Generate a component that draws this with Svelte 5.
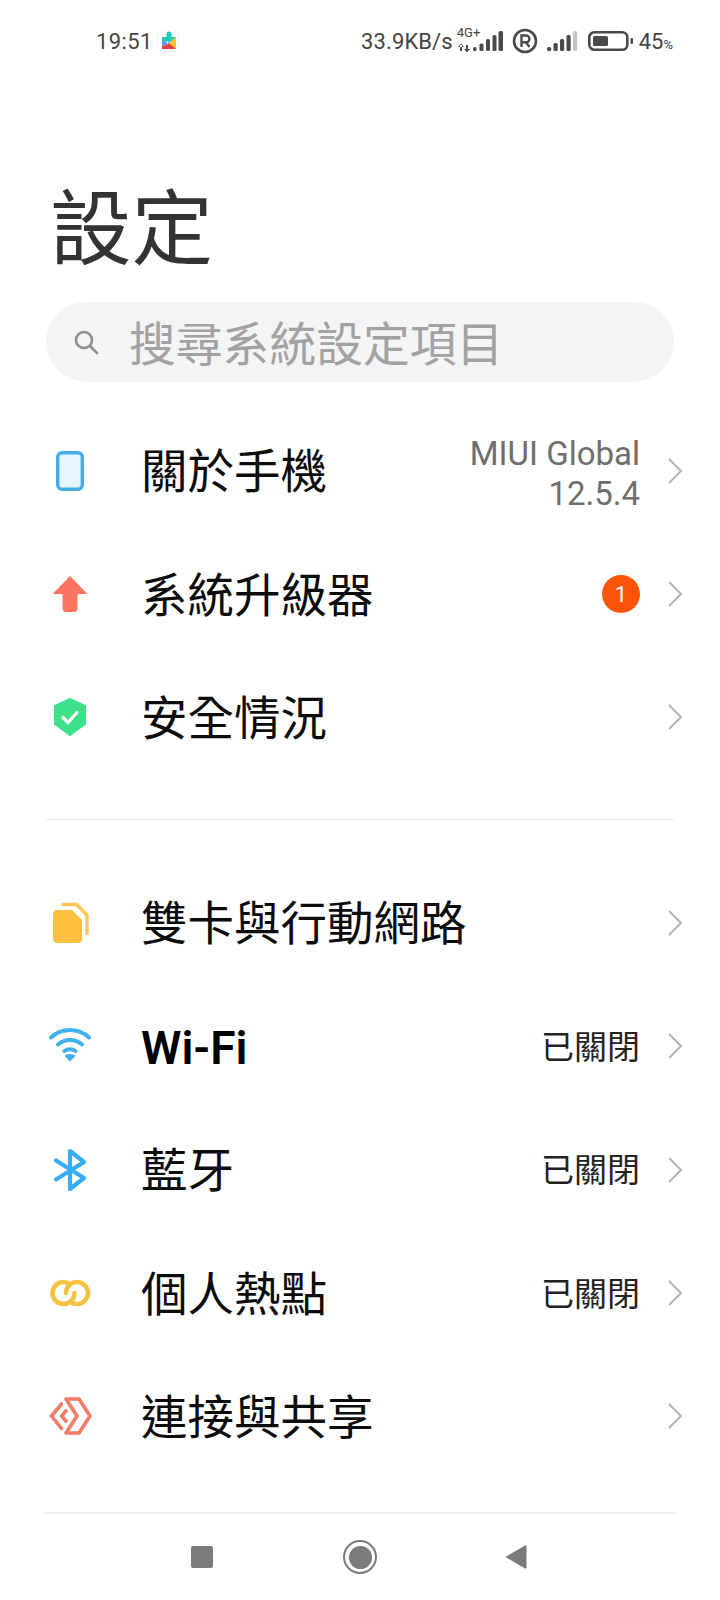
<script>
	const topRows = [
		{ icon: 'phone', label: '關於手機', value: ['MIUI Global', '12.5.4'] },
		{ icon: 'arrow', label: '系統升級器', badge: '1' },
		{ icon: 'shield', label: '安全情況' }
	];
	const netRows = [
		{ icon: 'sim', label: '雙卡與行動網路' },
		{ icon: 'wifi', label: 'Wi-Fi', value: ['已關閉'], strong: true },
		{ icon: 'bt', label: '藍牙', value: ['已關閉'] },
		{ icon: 'hotspot', label: '個人熱點', value: ['已關閉'] },
		{ icon: 'share', label: '連接與共享' }
	];
</script>

{#snippet rowIcon(name)}
	<svg class="row-icon" viewBox="0 0 48 48" width="48" height="48" fill="none">
		{#if name === 'phone'}
			<rect x="11.700" y="5.700" width="24.600" height="36.600" rx="4.500" fill="#e6f4fe" stroke="#44ade8" stroke-width="3.400" />
		{:else if name === 'arrow'}
			<path d="M24 6.500 40.500 23.500H31V39a2.500 2.500 0 0 1-2.500 2.500H19.500A2.500 2.500 0 0 1 17 39V23.500H7.500Z" fill="#fd7560" stroke="#fd7560" stroke-width="1" stroke-linejoin="round" />
		{:else if name === 'shield'}
			<path d="M24 6 39 13V31L24 42 9 31V13Z" fill="#3ee08a" stroke="#3ee08a" stroke-width="2" stroke-linejoin="round" />
			<path d="M17 24.500 22 29.500 31 19.500" stroke="#fff" stroke-width="3.200" stroke-linecap="round" stroke-linejoin="round" />
		{:else if name === 'sim'}
			<path d="M7 15a4 4 0 0 1 4-4H26L36 21V40a4 4 0 0 1-4 4H11a4 4 0 0 1-4-4Z" fill="#ffc040" />
			<path d="M17 5.500H30.500L41 16V34.500" stroke="#ffc752" stroke-width="3.400" stroke-linecap="round" stroke-linejoin="round" />
		{:else if name === 'wifi'}
			<path d="M5 15.500C15.500 5.500 32.500 5.500 43 15.500" stroke="#3fb0f2" stroke-width="4" stroke-linecap="round" />
			<path d="M12 22.500C19 16.500 29 16.500 36 22.500" stroke="#3fb0f2" stroke-width="4" stroke-linecap="round" />
			<path d="M18.500 29C21.500 26.800 26.500 26.800 29.500 29" stroke="#3fb0f2" stroke-width="4" stroke-linecap="round" />
			<path d="M24 38.500 19.500 34C22 32.500 26 32.500 28.500 34Z" fill="#3fb0f2" stroke="#3fb0f2" stroke-width="1.500" stroke-linejoin="round" />
		{:else if name === 'bt'}
			<path d="M10 14.500 38 32 24 43V5L38 16 10 33.500" stroke="#36adf5" stroke-width="4.200" stroke-linecap="round" stroke-linejoin="round" />
		{:else if name === 'hotspot'}
			<path d="M23 14.470A11 11 0 1 0 28.500 24" stroke="#f6c244" stroke-width="4.600" stroke-linecap="round" />
			<path d="M25.500 33.530A11 11 0 1 0 20 24" stroke="#f6c244" stroke-width="4.600" stroke-linecap="round" />
		{:else if name === 'share'}
			<path d="M20 7H33L44 24 33 41H20L31 24Z" stroke="#f27b66" stroke-width="3.600" stroke-linejoin="round" />
			<path d="M15.500 12 5.500 24 15.500 36.500" stroke="#f27b66" stroke-width="3.600" stroke-linecap="round" stroke-linejoin="round" />
			<path d="M20 19 15.500 24 20 29" stroke="#f27b66" stroke-width="3.600" stroke-linecap="round" stroke-linejoin="round" />
		{/if}
	</svg>
{/snippet}

{#snippet row(item)}
	<div class="row">
		<span class="icon-cell">{@render rowIcon(item.icon)}</span>
		<span class="label" class:strong={item.strong}>{item.label}</span>
		{#if item.value}
			<span class="value" class:dark={item.value[0] === '已關閉'}>
				{#each item.value as line}
					<span>{line}</span>
				{/each}
			</span>
		{/if}
		{#if item.badge}
			<span class="badge">{item.badge}</span>
		{/if}
		<svg class="chevron" viewBox="0 0 16 28" width="16" height="28" fill="none">
			<path d="M2 2 14 14 2 26" stroke="#b5b5b5" stroke-width="2" />
		</svg>
	</div>
{/snippet}

<div class="page">
	<header class="status">
		<div class="status-left">
			<span class="time">19:51</span>
			<svg viewBox="0 0 22 22" width="22" height="22" class="play">
				<rect x="0.500" y="0.500" width="21" height="21" rx="5" fill="#fff" stroke="#f4f4f4" />
				<path d="M5 7H9.500V4a2.500 2.500 0 0 1 5 0V7H19L12 13 10 11H5Z" fill="#1fc8b4" />
				<path d="M19 7V19L12 13Z" fill="#fbc02d" />
				<path d="M5 11H8a2.200 2.200 0 0 1 0 4.400H5Z" fill="#4d9cf5" />
				<path d="M5 19V15.400H8L12 13 19 19Z" fill="#e53e3e" />
			</svg>
		</div>
		<div class="status-right">
			<span class="speed">33.9KB/s</span>
			<span class="net">
				<span class="net-type">4G+</span>
				<svg viewBox="0 0 48 24" width="48" height="24" fill="#4a4a4a">
					<path d="M5 17V23H7V17ZM3 19 6 15.500 9 19ZM11 17V23H13V17ZM9 21 12 24.500 15 21Z" />
					<rect x="18" y="19" width="3.500" height="4" rx="1.500" />
					<rect x="24.500" y="15.500" width="4" height="7.500" rx="1.500" />
					<rect x="31" y="11" width="4" height="12" rx="1.500" />
					<rect x="37.500" y="7" width="4" height="16" rx="1.500" />
					<rect x="43.500" y="3" width="4.500" height="20" rx="1.500" />
				</svg>
			</span>
			<svg class="roam" viewBox="0 0 26 26" width="26" height="26" fill="none">
				<circle cx="13" cy="13" r="11" stroke="#4a4a4a" stroke-width="2.600" />
				<path d="M9.500 19V7.500H14a3.400 3.400 0 0 1 0 6.800H9.500M14 14.300 17.500 19" stroke="#4a4a4a" stroke-width="2.400" />
			</svg>
			<svg class="sig2" viewBox="0 0 34 24" width="34" height="24" fill="#4a4a4a">
				<rect x="1" y="18" width="4.200" height="4" rx="1.500" />
				<rect x="7.500" y="14" width="4.200" height="8" rx="1.500" />
				<rect x="14" y="10" width="4.200" height="12" rx="1.500" />
				<rect x="20.500" y="6" width="4.200" height="16" rx="1.500" />
				<rect x="27" y="2" width="4.200" height="20" rx="1.500" fill="#c4c4c4" />
			</svg>
			<svg class="battery" viewBox="0 0 46 20" width="46" height="20" fill="none">
				<rect x="1.300" y="1.300" width="38" height="17.400" rx="5" stroke="#4a4a4a" stroke-width="2.600" />
				<rect x="5" y="5" width="15" height="10" rx="1.500" fill="#4a4a4a" />
				<rect x="42.500" y="7" width="2.500" height="6" rx="1" fill="#4a4a4a" />
			</svg>
			<span class="pct">45<small>%</small></span>
		</div>
	</header>

	<h1 class="title">設定</h1>

	<div class="search">
		<svg viewBox="0 0 28 28" width="28" height="28" fill="none">
			<circle cx="12" cy="12" r="8" stroke="#8f8f8f" stroke-width="2.600" />
			<path d="M18 18 25 25" stroke="#8f8f8f" stroke-width="2.600" stroke-linecap="round" />
		</svg>
		<span>搜尋系統設定項目</span>
	</div>

	<section class="group first">
		{#each topRows as item}
			{@render row(item)}
		{/each}
	</section>

	<div class="divider"></div>

	<section class="group">
		{#each netRows as item}
			{@render row(item)}
		{/each}
	</section>

	<nav class="navbar">
		<span class="nav-square"></span>
		<span class="nav-home"><span></span></span>
		<svg viewBox="0 0 24 26" width="24" height="26"><path d="M1.500 13 21 1.500a1 1 0 0 1 1.500 1V23.500a1 1 0 0 1-1.500 1Z" fill="#7b7b7b" /></svg>
	</nav>
</div>

<style>
	:global(body) {
		margin: 0;
		background: #fff;
	}

	.page {
		width: 720px;
		height: 1600px;
		display: flex;
		flex-direction: column;
		background: #fff;
		overflow: hidden;
		font-family: Roboto, 'Noto Sans CJK TC', sans-serif;
		color: #111;
	}

	.status {
		height: 82px;
		flex: none;
		display: flex;
		align-items: center;
		justify-content: space-between;
		padding: 0 47px 0 96px;
		color: #444;
		font-size: 22px;
	}

	.status-left,
	.status-right {
		display: flex;
		align-items: center;
	}

	.time {
		letter-spacing: 0.4px;
	}

	.play {
		margin-left: 4px;
	}

	.speed {
		letter-spacing: 0.1px;
	}

	.net {
		position: relative;
		width: 48px;
		height: 24px;
		margin: -2px 0 0 2px;
	}

	.net svg {
		display: block;
	}

	.net-type {
		position: absolute;
		left: 2px;
		top: -2px;
		font-size: 13px;
		line-height: 14px;
	}

	.roam {
		margin-left: 9px;
	}

	.sig2 {
		margin-left: 8px;
	}

	.battery {
		margin-left: 8px;
	}

	.pct {
		margin-left: 5px;
	}

	.pct small {
		font-size: 13px;
	}

	.title {
		margin: 98px 0 0 0;
		padding-left: 50px;
		font-size: 81.500px;
		font-weight: 400;
		line-height: 100px;
		color: #333;
	}

	.search {
		margin: 22px 46px 0;
		height: 80px;
		border-radius: 40px;
		background: #f4f4f4;
		display: flex;
		align-items: center;
		padding-left: 26px;
		color: #a2a2a2;
		font-size: 46.800px;
	}

	.search span {
		margin-left: 29px;
		padding-bottom: 4px;
	}

	.group.first {
		margin-top: 27px;
	}

	.row {
		height: 123.400px;
		display: flex;
		align-items: center;
		padding: 0 37px 0 46px;
	}

	.icon-cell {
		width: 48px;
		height: 48px;
		margin-right: 47px;
		flex: none;
	}

	.row-icon {
		display: block;
	}

	.label {
		flex: 1;
		font-size: 46.500px;
		line-height: 60px;
		padding-top: 3px;
		color: #0c0c0c;
	}

	.label.strong {
		font-weight: 600;
		font-size: 46px;
		color: #000;
	}

	.value {
		display: flex;
		flex-direction: column;
		align-items: flex-end;
		font-size: 33px;
		line-height: 40px;
		padding-top: 6px;
		color: #6e6e6e;
	}

	.value.dark {
		padding-top: 3px;
		color: #222;
	}

	.badge {
		width: 38px;
		height: 38px;
		border-radius: 50%;
		background: #fb5407;
		color: #fff;
		display: flex;
		align-items: center;
		justify-content: center;
		font-size: 22px;
	}

	.chevron {
		margin-left: 27px;
		flex: none;
	}

	.divider {
		height: 1px;
		margin: 40px 46px 41px;
		background: #e9e9e9;
	}

	.navbar {
		margin-top: auto;
		height: 86px;
		border-top: 2px solid #eee;
		margin-left: 44px;
		margin-right: 44px;
		display: flex;
		align-items: center;
		padding-left: 147px;
	}

	.nav-square {
		width: 22px;
		height: 22px;
		background: #7b7b7b;
		border-radius: 2px;
	}

	.nav-home {
		width: 34px;
		height: 34px;
		margin: 0 127px 0 130px;
		border: 2.500px solid #7b7b7b;
		border-radius: 50%;
		box-sizing: border-box;
		display: flex;
		align-items: center;
		justify-content: center;
	}

	.nav-home span {
		width: 23px;
		height: 23px;
		border-radius: 50%;
		background: #7b7b7b;
	}
</style>
